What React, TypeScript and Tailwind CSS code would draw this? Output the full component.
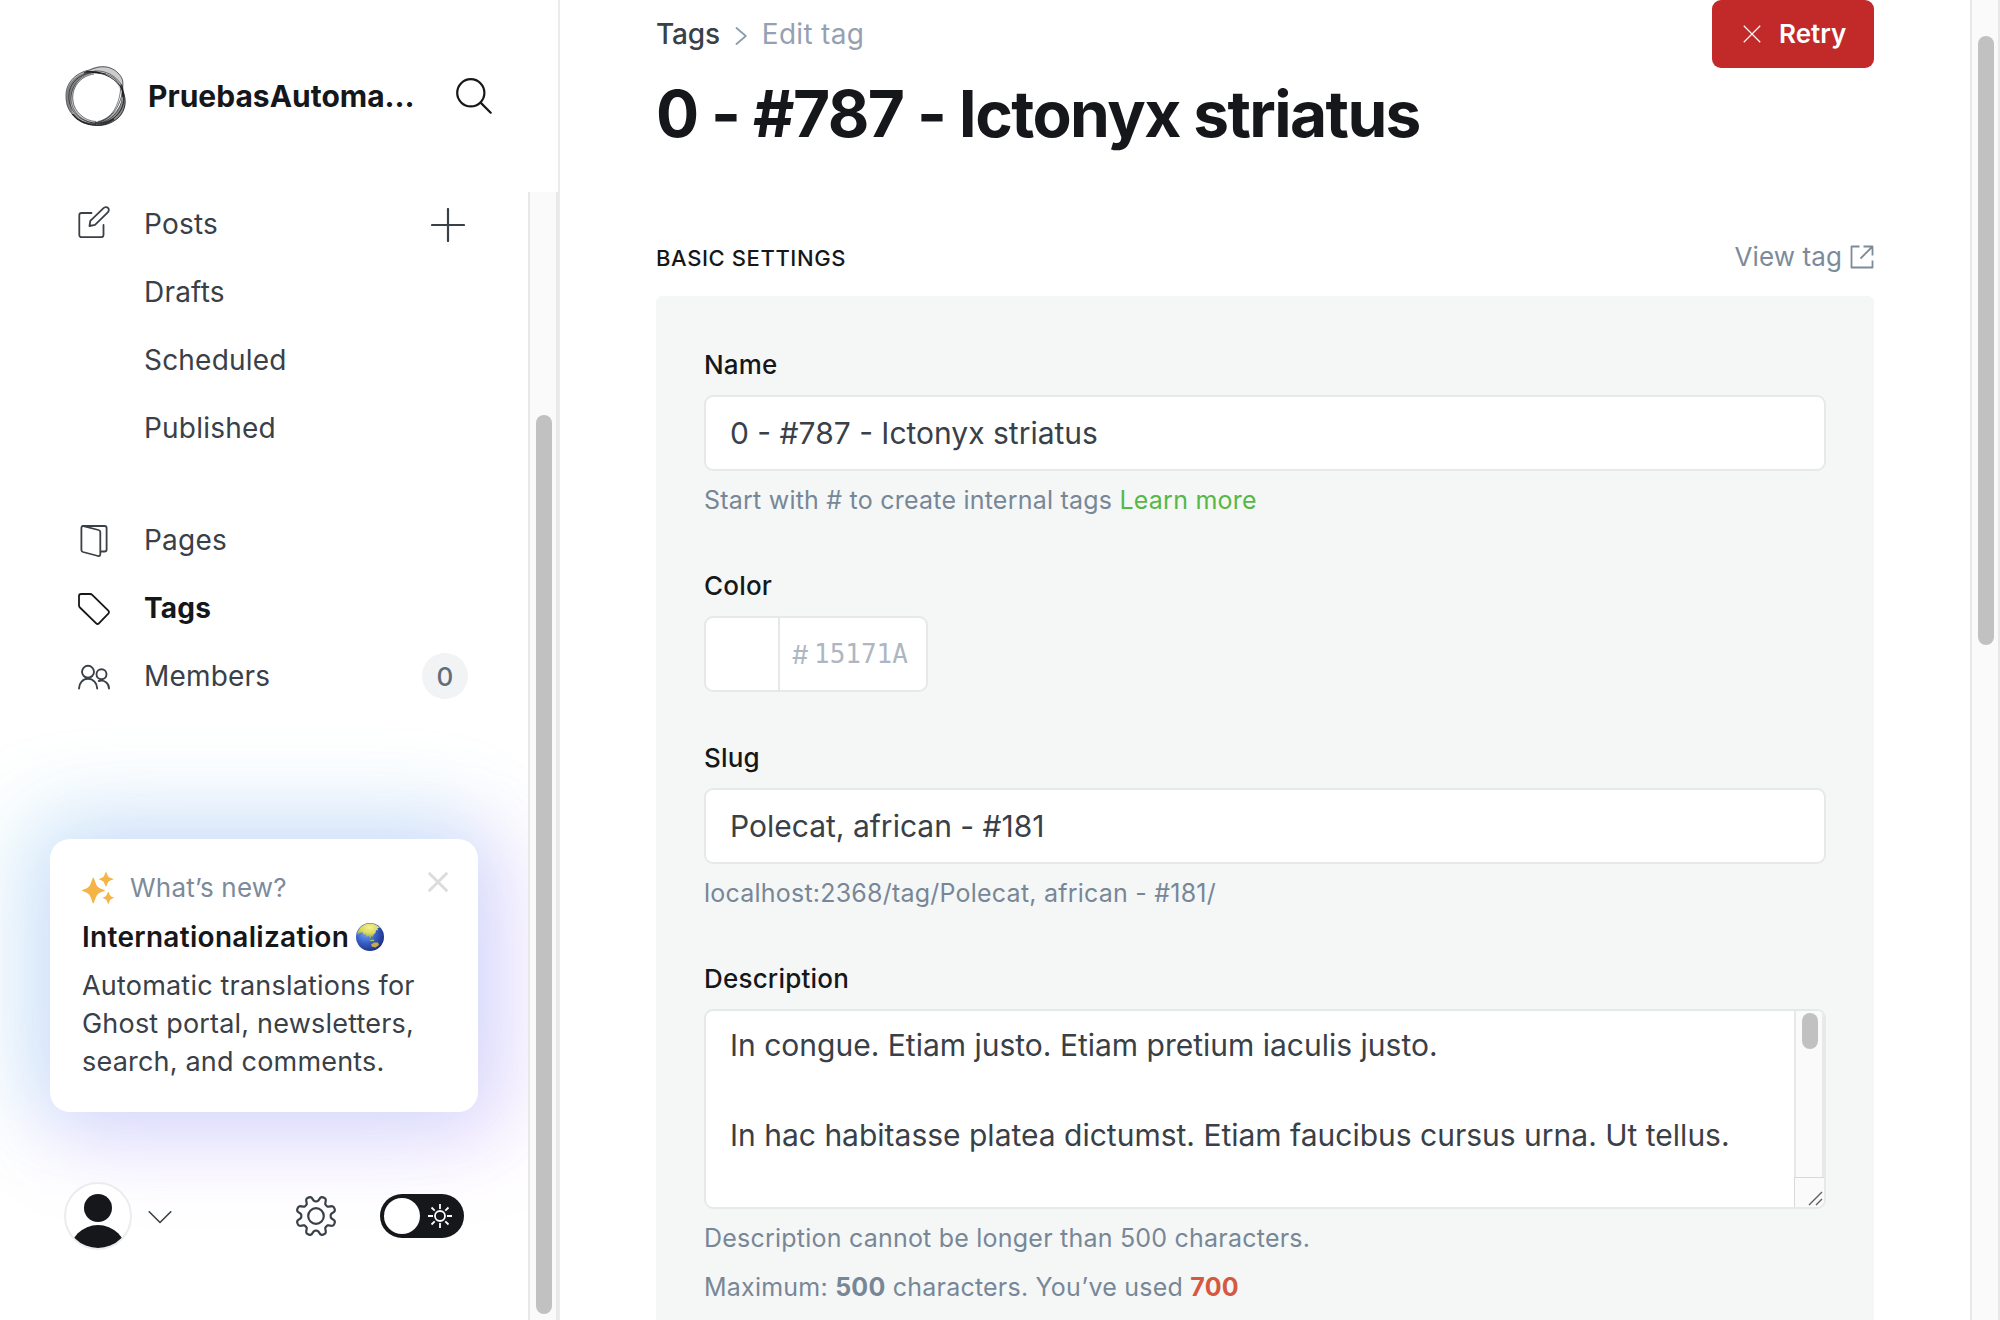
import React from 'react';

function Logo() {
  return (
    <svg width="64" height="64" viewBox="0 0 64 64" fill="none" className="shrink-0">
      <path fillRule="evenodd" fill="#15171a" fillOpacity=".22" d="M26 5C34 1 46 1 54 9C60 15 59 19 58.500 25C63 34 63 45 54 54C49 58 42 61.500 33 61.500C22 61 13 57 8 50C3 45 1 38 2 30C2 20 10 9 26 5ZM33 10C20 10 9 20 9 34C9 47 20 57.500 33 57.500C46 57.500 57.500 47 57.500 34C57.500 20 46 10 33 10Z" />
      <path fill="#15171a" fillOpacity=".4" d="M30 7C14 8 3 18 2.500 31C2 40 5 47 10 51C6 42 6 34 9 26C12 17 19 10 30 7Z" />
      <path fill="#15171a" fillOpacity=".35" d="M60 31C57 44 48 54 30 59C42 63 56 57 60 46C62 41 61.500 36 60 31Z" />
      <g stroke="#15171a" strokeWidth=".9">
        <path strokeOpacity=".75" d="M26 6C36 1 47 1.500 54 9C60 15 59 19 58.500 26C57 42 46 58 31 58.500" />
        <path strokeOpacity=".9" d="M22 7.500C40 7 54 16 58.500 26C63 36 62 46 54 54C47 60 40 61.500 33 61.500C22 61 13 57 8 50" />
        <path strokeOpacity=".7" d="M26 6C10 9 2 20 2 31C2 40 4 45 8 50C14 57 22 60 32 60" />
        <path strokeOpacity=".7" d="M42 10C28 6 16 10 9 19C1 31 5 46 16 54C28 62 44 60 52 52C60 44 61 36 58 25" />
        <path strokeOpacity=".6" d="M34 8C20 8 7 20 7 34C7 46 16 58 33 59.500C48 60 60 48 60 34C60 28 56 20 50 14C44 10 38 9 28 8" />
        <path strokeOpacity=".6" d="M30 10C16 12 7 24 9 37C10 47 20 57 32 57.500" />
        <path strokeOpacity=".6" d="M57 20C56 44 46 55 34 57.500M58.500 25C60 42 50 56 36 59" />
        <path strokeOpacity=".6" d="M30 7C42 6 52 12 57.500 21" />
      </g>
      <path stroke="#15171a" strokeWidth="1.700" strokeOpacity=".75" d="M9 50C15 58 24 61 33 61C40 61 46 58 50 55M20 9C26 6.500 31 8 36 9M57.500 21C59 26 59.500 29 59 33" />
    </svg>
  );
}

function SearchIcon() {
  return (
    <svg width="36" height="36" viewBox="0 0 36 36" fill="none" stroke="#15171a" strokeWidth="2.200" strokeLinecap="round" className="shrink-0">
      <circle cx="14.800" cy="14.800" r="13.600" />
      <path d="M24.600 24.600L34.700 34.700" />
    </svg>
  );
}

function PostsIcon() {
  return (
    <svg width="32" height="32" viewBox="0 0 32 32" fill="none" stroke="#394047" strokeWidth="1.800" strokeLinecap="round" strokeLinejoin="round" className="-mt-[4px]">
      <path d="M13.500 7H3.500C2.200 7 1.300 7.900 1.300 9.200V29C1.300 30.300 2.200 31.200 3.500 31.200H23.300C24.600 31.200 25.500 30.300 25.500 29V19" />
      <path d="M25.500 2.200C26.800 .800 28.800 .700 30 1.900C31.200 3.100 31.100 5 29.800 6.300L17 18.800L11.500 20L12.300 14.800Z" />
    </svg>
  );
}

function PagesIcon() {
  return (
    <svg width="32" height="32" viewBox="0 0 32 32" fill="none" stroke="#394047" strokeWidth="1.800" strokeLinecap="round" strokeLinejoin="round" className="mt-[2px]">
      <path d="M4.500 1H26.500C27.800 1 28.600 1.800 28.600 3V24.500C28.600 25.700 27.800 26.500 26.500 26.500H23" />
      <path d="M5.500 1.200L20.500 5C21.600 5.300 22.300 6 22.300 7.100V29.300C22.300 30.700 21.400 31.300 20.100 31L5 27C4 26.700 3.400 26 3.400 25V2.800C3.400 1.600 4.300 .900 5.500 1.200Z" />
    </svg>
  );
}

function TagIcon() {
  return (
    <svg width="32" height="32" viewBox="0 0 32 32" fill="none" stroke="#15171a" strokeWidth="1.800" strokeLinecap="round" strokeLinejoin="round" className="mt-[2px]">
      <path d="M3.200 1H12.200C13 1 13.600 1.200 14.200 1.800L30.300 17.700C31.200 18.600 31.200 19.700 30.300 20.600L20.900 30.300C20.100 31.200 19.100 31.200 18.200 30.300L1.900 14.500C1.300 13.900 1 13.200 1 12.400V3.200C1 1.900 1.900 1 3.200 1Z" />
    </svg>
  );
}

function MembersIcon() {
  return (
    <svg width="32" height="32" viewBox="0 0 32 32" fill="none" stroke="#394047" strokeWidth="1.900" strokeLinecap="round" className="mt-[2px]">
      <circle cx="10" cy="10.800" r="6" />
      <path d="M1 27.500C1 22 4.900 17.800 10 17.800C15.100 17.800 19.200 22 19.200 27.500" />
      <circle cx="23.500" cy="13.300" r="5" />
      <path d="M20.800 20C26.500 18.500 31 22.300 31 27.500" />
    </svg>
  );
}

function NavRow({ icon, label, active, children }: { icon?: React.ReactNode; label: string; active?: boolean; children?: React.ReactNode }) {
  return (
    <div className="flex h-[68px] items-center pl-[78px] pr-[60px]">
      <span className="w-[66px] shrink-0">{icon}</span>
      <span className={active ? 'flex-1 text-[28px] font-bold tracking-[0.2px] text-[#15171a]' : 'flex-1 text-[28px] tracking-[0.2px] text-[#394047]'}>{label}</span>
      {children}
    </div>
  );
}

function Sparkles() {
  return (
    <svg width="32" height="32" viewBox="0 0 32 32" fill="#f5b546" className="shrink-0">
      <path d="M11.300 5.500C12.200 5.500 13.400 12.500 15.800 14.800C18 17 22.900 17.700 22.900 18.500C22.900 19.300 18 20 15.800 22.200C13.400 24.500 12.200 31.500 11.300 31.500C10.400 31.500 9.200 24.500 6.800 22.200C4.600 20 0 19.300 0 18.500C0 17.700 4.600 17 6.800 14.800C9.200 12.500 10.400 5.500 11.300 5.500Z" />
      <path d="M24 0C24.700 0 25.400 3.800 26.800 5.100C28.100 6.400 31.400 6.700 31.400 7.300C31.400 7.900 28.100 8.200 26.800 9.500C25.400 10.800 24.700 14.600 24 14.600C23.300 14.600 22.600 10.800 21.200 9.500C19.900 8.200 17 7.900 17 7.300C17 6.700 19.900 6.400 21.200 5.100C22.600 3.800 23.300 0 24 0Z" />
      <path d="M26.300 19.700C26.900 19.700 27.500 22.900 28.600 23.900C29.600 24.900 31.900 25.200 31.900 25.700C31.900 26.200 29.600 26.500 28.600 27.500C27.500 28.500 26.900 31.900 26.300 31.900C25.700 31.900 25.100 28.500 24 27.500C23 26.500 20.800 26.200 20.800 25.700C20.800 25.200 23 24.900 24 23.900C25.100 22.900 25.700 19.700 26.300 19.700Z" />
    </svg>
  );
}

function Globe() {
  return (
    <svg width="28" height="28" viewBox="0 0 28 28" className="shrink-0">
      <defs>
        <radialGradient id="sea" cx=".35" cy=".35" r=".7">
          <stop offset="0" stopColor="#7ea6ea" />
          <stop offset=".5" stopColor="#3a62cc" />
          <stop offset="1" stopColor="#1c2f80" />
        </radialGradient>
        <radialGradient id="land" cx=".55" cy=".25" r=".75">
          <stop offset="0" stopColor="#f6f08c" />
          <stop offset=".5" stopColor="#dcd960" />
          <stop offset="1" stopColor="#86a04a" />
        </radialGradient>
      </defs>
      <circle cx="14" cy="14" r="14" fill="url(#sea)" />
      <path fill="url(#land)" d="M1.500 9C4 3.500 9 .700 14 .600C18 .600 22 2.500 24 5L21.500 5L22 7.500L20 7L19.500 10L17.500 11.500L17 14L15.500 12.500L14.500 16L12.500 12.500L11 14L9.500 11L7.500 11.500L6.500 9L4 10L1 11.500Z" />
      <path fill="#c9a650" d="M15 21.500L18 19.500L22 19.500L23 22L19.500 24.500L16 23.800Z" />
      <path fill="#a9c25b" d="M12 16L14 17L17.500 16.500L18.500 18L15 18.200Z" />
    </svg>
  );
}

function WhatsNew() {
  return (
    <div className="absolute left-[50px] top-[839px] h-[273px] w-[428px] rounded-[20px] bg-white px-[32px] pt-[33px] shadow-[-14px_-12px_84px_16px_rgb(75_215_226/0.22),14px_12px_84px_16px_rgb(190_103_255/0.26)]">
      <div className="flex h-[32px] items-center">
        <Sparkles />
        <span className="-mt-[2px] ml-[16px] flex-1 text-[26px] tracking-[0.2px] text-[#7c8b9a]">What’s new?</span>
        <svg width="20" height="20" viewBox="0 0 20 20" stroke="#dcdcdc" strokeWidth="3" strokeLinecap="round" className="-mr-[2px] -mt-[12px]">
          <path d="M1.700 1.700L18.300 18.300M18.300 1.700L1.700 18.300" />
        </svg>
      </div>
      <div className="mt-[14px] flex h-[38px] items-center text-[28px] font-semibold tracking-[0.3px] text-[#15171a]">
        <span className="mr-[7px]">Internationalization</span>
        <Globe />
      </div>
      <p className="mt-[11px] whitespace-nowrap text-[27px] leading-[38px] tracking-[0.2px] text-[#394047]">
        Automatic translations for<br />Ghost portal, newsletters,<br />search, and comments.
      </p>
    </div>
  );
}

function Gear() {
  const pts: string[] = [];
  for (let i = 0; i <= 160; i++) {
    const a = (i / 160) * Math.PI * 2;
    const w = Math.cos(8 * (a - Math.PI / 8));
    const r = 17.3 + 2.7 * Math.tanh(2 * w);
    pts.push((20 + r * Math.cos(a)).toFixed(2) + ' ' + (20 + r * Math.sin(a)).toFixed(2));
  }
  return (
    <svg width="42" height="42" viewBox="-1 -1 42 42" fill="none" stroke="#394047" strokeWidth="2.200" strokeLinejoin="round">
      <path d={'M' + pts.join('L') + 'Z'} />
      <circle cx="20" cy="20" r="7.800" />
    </svg>
  );
}

function SidebarFooter() {
  return (
    <div className="absolute left-[64px] top-[1182px] flex h-[68px] w-[400px] items-center">
      <svg width="68" height="68" viewBox="0 0 68 68">
        <defs>
          <clipPath id="face"><circle cx="34" cy="34" r="32" /></clipPath>
        </defs>
        <circle cx="34" cy="34" r="33" fill="#fff" stroke="#ebeced" strokeWidth="2" />
        <circle cx="34" cy="26" r="14" fill="#15171a" />
        <circle cx="34" cy="71.500" r="28.500" fill="#15171a" clipPath="url(#face)" />
      </svg>
      <svg width="24" height="14" viewBox="0 0 24 14" fill="none" stroke="#394047" strokeWidth="1.600" strokeLinecap="round" strokeLinejoin="round" className="ml-[16px] mt-[2px]">
        <path d="M1.200 1.800L12 12.500L22.800 1.800" />
      </svg>
      <div className="ml-[123px]"><Gear /></div>
      <div className="ml-auto flex h-[44px] w-[84px] items-center rounded-full bg-[#15171a] pl-[4px]">
        <span className="size-[36px] rounded-full bg-white" />
        <svg width="24" height="24" viewBox="0 0 24 24" fill="none" stroke="#fff" strokeWidth="1.800" className="ml-[8px]">
          <circle cx="12" cy="12" r="5" />
          <path d="M12 0V5M12 19V24M0 12H5M19 12H24M3.500 3.500L6.700 6.700M17.300 17.300L20.500 20.500M3.500 20.500L6.700 17.300M17.300 6.700L20.500 3.500" />
        </svg>
      </div>
    </div>
  );
}

function Sidebar() {
  return (
    <aside className="relative flex h-full w-[560px] shrink-0 flex-col overflow-hidden border-r-2 border-[#ebebeb]">
      <header className="flex h-[192px] items-center pl-[64px] pr-[66px]">
        <Logo />
        <span className="ml-[20px] flex-1 whitespace-nowrap text-[30px] font-bold text-[#15171a]">PruebasAutoma…</span>
        <SearchIcon />
      </header>
      <div className="flex flex-1">
        <nav className="w-[528px]">
          <div className="-mt-[2px]">
            <NavRow icon={<PostsIcon />} label="Posts">
              <svg width="34" height="34" viewBox="0 0 34 34" stroke="#394047" strokeWidth="2.200" strokeLinecap="round" className="mr-[3px] mt-[2px]"><path d="M17 1V33M1 17H33" /></svg>
            </NavRow>
            <NavRow label="Drafts" />
            <NavRow label="Scheduled" />
            <NavRow label="Published" />
          </div>
          <div className="mt-[44px]">
            <NavRow icon={<PagesIcon />} label="Pages" />
            <NavRow icon={<TagIcon />} label="Tags" active />
            <NavRow icon={<MembersIcon />} label="Members">
              <span className="flex size-[46px] items-center justify-center rounded-full bg-[#f1f3f4] text-[26px] font-medium text-[#626d79]">0</span>
            </NavRow>
          </div>
        </nav>
      </div>
      <WhatsNew />
      <SidebarFooter />
      <div className="absolute bottom-0 right-0 top-[192px] w-[30px] border-x-2 border-[#e8e8e8] bg-[#fafafa] pl-[6px] pt-[223px]">
        <div className="h-[899px] w-[16px] rounded-full bg-[#c1c1c1]" />
      </div>
    </aside>
  );
}

const labelClass = 'block h-[30px] text-[26px] leading-[30px] font-medium tracking-[0.2px] text-[#15171a]';
const inputClass = 'mt-[15px] flex h-[76px] items-center rounded-[9px] border-2 border-[#e6e9e9] bg-white px-[24px] text-[30px] text-[#394047]';
const hintClass = 'mt-[14px] h-[30px] whitespace-nowrap text-[25px] leading-[30px] tracking-[0.22px] text-[#788797]';

function Form() {
  return (
    <section className="flex-1 rounded-t-[6px] bg-[#f4f7f6] px-[48px] pt-[54px]">
      <div className="h-[221px]">
        <span className={labelClass}>Name</span>
        <div className={inputClass}>0 - #787 - Ictonyx striatus</div>
        <p className={hintClass}>Start with # to create internal tags <span className="text-[#57b846]">Learn more</span></p>
      </div>
      <div className="h-[172px]">
        <span className={labelClass}>Color</span>
        <div className="mt-[15px] flex h-[76px] w-[224px] items-center rounded-[9px] border-2 border-[#e6e9e9] bg-white text-[#aeb7c1]">
          <span className="h-full w-[74px] border-r-2 border-[#e6e9e9]" />
          <span className="ml-[12px] w-[22px] text-[26px]">#</span>
          <span className="mt-[1px] font-['DejaVu_Sans_Mono'] text-[26px]">15171A</span>
        </div>
      </div>
      <div className="h-[221px]">
        <span className={labelClass}>Slug</span>
        <div className={inputClass}>Polecat, african - #181</div>
        <p className={hintClass}>localhost:2368/tag/Polecat, african - #181/</p>
      </div>
      <div>
        <span className={labelClass}>Description</span>
        <div className="mt-[15px] flex h-[200px] overflow-hidden rounded-[9px] border-2 border-[#e6e9e9] bg-white">
          <div className="flex-1 whitespace-nowrap px-[24px] pt-[12px] text-[30px] leading-[45px] text-[#394047]">
            <p>In congue. Etiam justo. Etiam pretium iaculis justo.</p>
            <p className="mt-[45px]">In hac habitasse platea dictumst. Etiam faucibus cursus urna. Ut tellus.</p>
          </div>
          <div className="flex w-[30px] flex-col">
            <div className="flex-1 border-x-2 border-[#e8e8e8] bg-[#fafafa] pl-[6px] pt-[2px]">
              <div className="h-[36px] w-[16px] rounded-full bg-[#c1c1c1]" />
            </div>
            <div className="h-[30px] border-l border-t border-[#d9d9d9] bg-[#fafafa]">
              <svg width="29" height="29" viewBox="0 0 29 29" stroke="#5f5f5f" strokeWidth="1.400"><path d="M14 27L27 14M21 27L27 21" /></svg>
            </div>
          </div>
        </div>
        <p className={hintClass}>Description cannot be longer than 500 characters.</p>
        <p className="mt-[19px] h-[30px] whitespace-nowrap text-[25px] leading-[30px] tracking-[0.22px] text-[#788797]">
          Maximum: <b>500</b> characters. You’ve used <b className="text-[#d5593f]">700</b>
        </p>
      </div>
    </section>
  );
}

export default function App() {
  return (
    <div className="flex h-[1320px] w-[2000px] overflow-hidden bg-white font-[Inter,sans-serif]">
      <Sidebar />
      <main className="flex flex-1 flex-col pl-[96px] pr-[96px]">
        <div className="flex h-[68px] justify-between">
          <div className="flex items-center text-[28px]">
            <span className="font-medium tracking-[-0.2px] text-[#394047]">Tags</span>
            <svg width="12" height="18" viewBox="0 0 12 18" fill="none" stroke="#8e9cac" strokeWidth="1.800" strokeLinecap="round" strokeLinejoin="round" className="ml-[15px] mr-[15px] mt-[3px]"><path d="M1.500 1L10.800 9L1.500 17" /></svg>
            <span className="tracking-[0.3px] text-[#95a1b1]">Edit tag</span>
          </div>
          <button className="flex w-[162px] items-center rounded-[9px] bg-[#c22a2a] pl-[31px] text-[26px] font-semibold text-white">
            <svg width="18" height="18" viewBox="0 0 19 19" stroke="#fff" strokeWidth="1.200" className="mr-[18px]"><path d="M.8.8L18.200 18.200M18.200.8L.8 18.200" /></svg>
            <span className="-mt-[1px]">Retry</span>
          </button>
        </div>
        <h1 className="mt-[6px] h-[80px] whitespace-nowrap text-[64px] font-bold leading-[80px] tracking-[-1.6px] text-[#15171a]">0 - #787 - Ictonyx striatus</h1>
        <div className="mt-[86px] flex h-[34px] items-center justify-between">
          <h2 className="mt-[2px] text-[22px] font-medium tracking-[0.6px] text-[#15171a]">BASIC SETTINGS</h2>
          <div className="flex items-center text-[26px] tracking-[0.1px] text-[#7c8b9a]">
            <span className="-mt-[1px]">View tag</span>
            <svg width="24" height="24" viewBox="0 0 24 24" fill="none" stroke="#7c8b9a" strokeWidth="1.800" strokeLinejoin="round" className="ml-[8px]"><path d="M9.500 1.500H1.500V22.500H22.500V15.500M13.500 1.500H22.500V10.500M22.500 1.500L10.500 13.500" /></svg>
          </div>
        </div>
        <div className="mt-[22px] flex flex-1"><Form /></div>
      </main>
      <div className="w-[30px] shrink-0 border-x-2 border-[#e8e8e8] bg-[#fafafa] pl-[6px] pt-[36px]">
        <div className="h-[609px] w-[16px] rounded-full bg-[#c1c1c1]" />
      </div>
    </div>
  );
}
